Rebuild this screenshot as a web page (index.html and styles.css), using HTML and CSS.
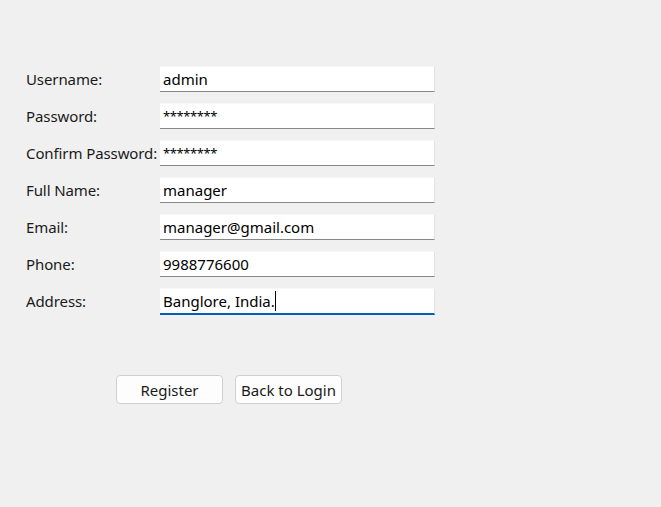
FILE: index.html
```html
<!DOCTYPE html>
<html>
<head>
<meta charset="utf-8">
<link rel="stylesheet" href="styles.css">
</head>
<body>
<div class="form">
  <label class="lbl">Username:</label><div class="field">admin</div>
  <label class="lbl">Password:</label><div class="field pw">********</div>
  <label class="lbl">Confirm Password:</label><div class="field pw">********</div>
  <label class="lbl">Full Name:</label><div class="field">manager</div>
  <label class="lbl">Email:</label><div class="field">manager@gmail.com</div>
  <label class="lbl">Phone:</label><div class="field">9988776600</div>
  <label class="lbl">Address:</label><div class="field focus">Banglore, India.<span class="caret"></span></div>
</div>
<div class="actions">
  <button class="btn">Register</button>
  <button class="btn">Back to Login</button>
</div>
</body>
</html>
```

FILE: styles.css
```css
html, body {
  margin: 0;
  padding: 0;
  background: #f0f0f0;
  width: 661px;
  height: 507px;
  overflow: hidden;
}
body {
  font-family: "Noto Sans", "Open Sans", sans-serif;
  font-size: 15px;
  color: #1a1a1a;
}
.form {
  display: grid;
  grid-template-columns: 134px 275px;
  row-gap: 11px;
  padding: 66px 0 0 26px;
}
.lbl {
  display: flex;
  align-items: center;
  height: 26px;
  white-space: nowrap;
  color: #1a1a1a;
  letter-spacing: -0.1px;
}
.field {
  box-sizing: border-box;
  height: 26px;
  background: #ffffff;
  border-bottom: 1px solid #878787;
  border-right: 1px solid #e3e3e3;
  border-top: 1px solid #f7f7f7;
  padding: 0 2px 0 3px;
  display: flex;
  align-items: center;
  color: #000;
  white-space: nowrap;
}
.field.pw {
  font-size: 13px;
  letter-spacing: -0.4px;
  align-items: flex-start;
  padding-top: 3px;
}
.field.focus {
  border-bottom: 2px solid #005fb8;
  height: 27px;
}
.caret {
  display: inline-block;
  width: 1px;
  height: 20px;
  background: #000;
}
.actions {
  display: flex;
  gap: 12px;
  padding: 60px 0 0 116px;
}
.btn {
  box-sizing: border-box;
  width: 107px;
  height: 29px;
  background: #fdfdfd;
  border: 1px solid #d0d0d0;
  border-radius: 4px;
  font-family: "Noto Sans", "Open Sans", sans-serif;
  font-size: 15px;
  color: #1a1a1a;
  padding: 0;
}
```
